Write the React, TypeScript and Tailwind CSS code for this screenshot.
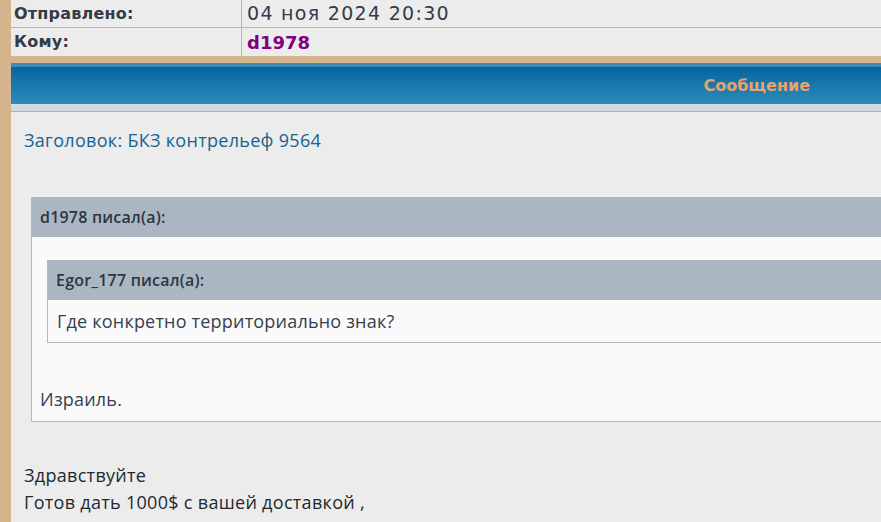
const body = { fontFamily: '"Open Sans", "DejaVu Sans", sans-serif' };
const verdana = { fontFamily: '"DejaVu Sans", Verdana, sans-serif' };

const App = () => {
  return (
    <div className="h-[522px] w-[881px] overflow-hidden bg-[#d4b48c] pl-[11px]">
      {/* шапка письма */}
      <div className="bg-[#ececec]" style={verdana}>
        <div className="flex h-[28px] border-b border-[#b4b8bc]">
          <div className="flex w-[231px] items-center border-r border-[#b4b8bc] pl-[3px] text-[16px] font-bold tracking-[0.2px] text-[#323b46]">
            Отправлено:
          </div>
          <div className="flex items-center pl-[5px] text-[19px] tracking-[1.3px] text-[#323b46]">
            04 ноя 2024 20:30
          </div>
        </div>
        <div className="flex h-[28px]">
          <div className="flex w-[231px] items-center border-r border-[#b4b8bc] pl-[3px] text-[16px] font-bold tracking-[0.2px] text-[#323b46]">
            Кому:
          </div>
          <div className="flex items-center pl-[5px] text-[18px] font-bold text-[#800080]">
            d1978
          </div>
        </div>
      </div>

      <div className="h-[7px]" />

      {/* синяя полоса */}
      <div className="h-[4px] bg-[#3d8ab8]" />
      <div className="flex h-[37px] items-center justify-end bg-gradient-to-b from-[#05659c] to-[#2a8cbb] pr-[71px]">
        <span className="text-[16px] font-bold text-[#e8a46c]" style={verdana}>
          Сообщение
        </span>
      </div>
      <div className="h-[8px] border-b border-[#a8b0b8] bg-[#d3d9df]" />

      <div className="h-[420px] bg-[#ececec] pt-[14px]" style={body}>
        <div className="pl-[13px] text-[18px] leading-[28px] tracking-[0.3px] text-[#17638e]">
          Заголовок: БКЗ контрельеф 9564
        </div>

        <div className="mt-[43px] ml-[20px] -mr-[10px] border-b border-l border-[#b4b8bc] bg-[#fafafa]">
          <div className="flex h-[40px] items-center bg-[#aab7c2] pl-[8px] text-[16px] font-semibold tracking-[0.2px] text-[#2c3640]">
            d1978 писал(а):
          </div>
          <div className="pt-[23px]">
            <div className="ml-[15px] border-b border-l border-[#b4b8bc] bg-[#fafafa]">
              <div className="flex h-[40px] items-center bg-[#aab7c2] pl-[8px] text-[16px] font-semibold tracking-[0.2px] text-[#2c3640]">
                Egor_177 писал(а):
              </div>
              <div className="flex h-[42px] items-center pl-[9px] text-[18px] tracking-[0.2px] text-[#35414c]">
                Где конкретно территориально знак?
              </div>
            </div>
            <div className="flex h-[78px] items-end pb-[8px] pl-[8px] text-[18px] tracking-[0.2px] text-[#35414c]">
              Израиль.
            </div>
          </div>
        </div>

        <div className="mt-[40px] pl-[13px] text-[18px] leading-[27px] tracking-[0.3px] text-[#222a30]">
          <div>Здравствуйте</div>
          <div>Готов дать 1000$ с вашей доставкой ,</div>
        </div>
      </div>
    </div>
  );
};

export default App;
